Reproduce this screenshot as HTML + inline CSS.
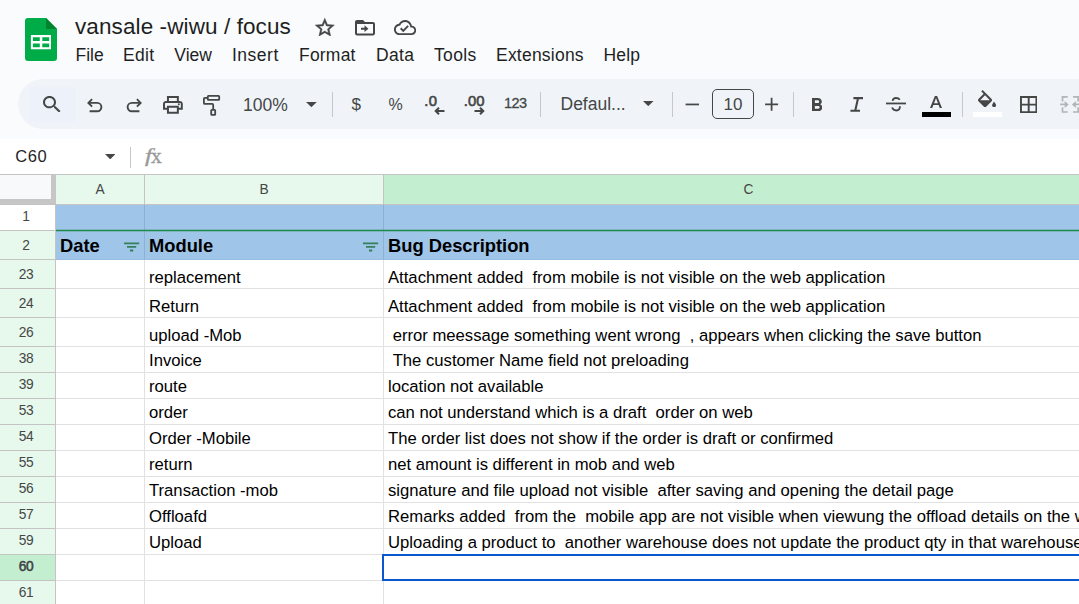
<!DOCTYPE html>
<html><head><meta charset="utf-8"><title>vansale -wiwu / focus</title>
<style>
*{box-sizing:border-box;margin:0;padding:0}
html,body{width:1079px;height:604px;overflow:hidden;background:#f9fbfd;font-family:"Liberation Sans",sans-serif;color:#1f1f1f}
.abs{position:absolute}
div{position:absolute;white-space:pre}
#title{left:75px;top:12px;font-size:22.5px;line-height:30px;color:#1f1f1f;letter-spacing:0.1px}
.menu{top:43px;font-size:17.5px;line-height:24px;color:#1f1f1f}
#tb{left:18px;top:79px;width:1100px;height:50px;border-radius:25px;background:#f0f4f9}
#tbs{left:29px;top:87px;width:47px;height:35px;background:#edf2fa}
.tbt{font-size:17.5px;color:#444746;line-height:24px}
.sep{top:92px;width:1px;height:25px;background:#c7c7c7}
#fbar{left:0;top:139px;width:1079px;height:35px;background:#fff}
#grid{left:0;top:174px;width:1079px;height:430px;background:#fff}
.hl{height:1px;background:#e1e1e1}
.vl{width:1px;background:#e1e1e1}
.rh{left:0;width:52px;text-align:center;font-size:13.75px;color:#444746;letter-spacing:-0.35px}
.ch{top:175px;height:29px;line-height:29px;text-align:center;font-size:13.75px;color:#444746;background:#e7f8ed}
.c{font-size:16.67px;line-height:20px;color:#000;height:20px}
.hb{font-size:18.33px;font-weight:700;line-height:22px;color:#000}
</style></head><body>
<svg class="abs" style="left:25px;top:17.7px" width="32" height="43" viewBox="0 0 32 43" ><path d="M3 0H21L32 10.900V40a3 3 0 0 1-3 3H3a3 3 0 0 1-3-3V3a3 3 0 0 1 3-3z" fill="#00ac47"/><path d="M21 0L32 10.900H21z" fill="#00832d"/><path d="M5.900 16.900H26V31.200H5.900zM7.900 19.300V22.900H14.800V19.300zM17.300 19.300V22.900H24.200V19.300zM7.900 25.600V29.200H14.800V25.600zM17.300 25.600V29.200H24.200V25.600z" fill="#fff" fill-rule="evenodd"/></svg>
<div id="title">vansale -wiwu / focus</div>
<svg class="abs" style="left:315.1px;top:18px" width="19.6" height="18.4" viewBox="1.800 1.700 20.400 19.500" preserveAspectRatio="none"><path fill="#444746" stroke="#444746" stroke-width="0.450" d="M22 9.240l-7.190-.620L12 2 9.190 8.630 2 9.240l5.460 4.730L5.820 21 12 17.270 18.180 21l-1.630-7.030L22 9.240zM12 15.400l-3.760 2.270 1-4.280-3.320-2.880 4.380-.380L12 6.100l1.710 4.040 4.380.380-3.320 2.880 1 4.280L12 15.400z"/></svg>
<svg class="abs" style="left:355.2px;top:20px" width="20" height="15.5" viewBox="2 4 20 16" preserveAspectRatio="none"><path fill="#444746" d="M20 6h-8l-2-2H4c-1.100 0-2 .900-2 2v12c0 1.100.900 2 2 2h16c1.100 0 2-.900 2-2V8c0-1.100-.900-2-2-2zm0 12H4V8h16v10zm-8.500-1.500l4-3.500-4-3.500v2.500H8v2h3.500v2.500z"/></svg>
<svg class="abs" style="left:394px;top:20.4px" width="22.2" height="15" viewBox="0 4 24 16" preserveAspectRatio="none"><path fill="#444746" d="M19.350 10.040C18.670 6.590 15.640 4 12 4 9.110 4 6.600 5.640 5.350 8.040 2.340 8.360 0 10.910 0 14c0 3.310 2.690 6 6 6h13c2.760 0 5-2.240 5-5 0-2.640-2.050-4.780-4.650-4.960zM19 18H6c-2.210 0-4-1.790-4-4 0-2.050 1.530-3.760 3.560-3.970l1.070-.110.500-.950C8.080 7.140 9.940 6 12 6c2.620 0 4.880 1.860 5.390 4.430l.300 1.500 1.530.110c1.560.100 2.780 1.410 2.780 2.960 0 1.650-1.350 3-3 3zm-9-3.820l-2.090-2.090L6.500 13.500 10 17l6.010-6.010-1.410-1.410z"/></svg>
<div class="menu" style="left:75.5px;letter-spacing:0px">File</div>
<div class="menu" style="left:123px;letter-spacing:0.3px">Edit</div>
<div class="menu" style="left:174.3px;letter-spacing:0px">View</div>
<div class="menu" style="left:232px;letter-spacing:0.5px">Insert</div>
<div class="menu" style="left:299px;letter-spacing:0.2px">Format</div>
<div class="menu" style="left:376px;letter-spacing:0.3px">Data</div>
<div class="menu" style="left:434px;letter-spacing:0.35px">Tools</div>
<div class="menu" style="left:496px;letter-spacing:0.22px">Extensions</div>
<div class="menu" style="left:603.5px;letter-spacing:0.2px">Help</div>
<div id="tb"></div><div id="tbs"></div>
<svg class="abs" style="left:43.4px;top:95.9px" width="17.5" height="16.5" viewBox="3 3 17.5 17.5" preserveAspectRatio="none"><path fill="#444746" d="M15.500 14h-.790l-.280-.270C15.410 12.590 16 11.110 16 9.500 16 5.910 13.090 3 9.500 3S3 5.910 3 9.500 5.910 16 9.500 16c1.610 0 3.090-.590 4.230-1.570l.270.280v.790l5 4.990L20.490 19l-4.990-5zm-6 0C7.010 14 5 11.990 5 9.500S7.010 5 9.500 5 14 7.010 14 9.500 11.990 14 9.500 14z"/></svg>
<svg class="abs" style="left:86px;top:97.4px" width="18" height="17" viewBox="0 0 18 17" ><g fill="none" stroke="#444746" stroke-width="1.9" stroke-linecap="butt" stroke-linejoin="miter"><path d="M6.100 2.200L2.400 5.900l3.700 3.700"/><path d="M2.600 5.900h8.600a4.200 4.200 0 0 1 0 8.400H3.600"/></g></svg>
<svg class="abs" style="left:124.5px;top:97.4px" width="18" height="17" viewBox="0 0 18 17" ><g fill="none" stroke="#444746" stroke-width="1.9" stroke-linecap="butt" stroke-linejoin="miter" transform="translate(18 0) scale(-1 1)"><path d="M6.100 2.200L2.400 5.900l3.700 3.700"/><path d="M2.600 5.900h8.600a4.200 4.200 0 0 1 0 8.400H3.600"/></g></svg>
<svg class="abs" style="left:163.3px;top:96.2px" width="19.8" height="17.7" viewBox="2 3 20 18" preserveAspectRatio="none"><path fill="#444746" d="M19 8h-1V3H6v5H5c-1.660 0-3 1.340-3 3v6h4v4h12v-4h4v-6c0-1.660-1.340-3-3-3zM8 5h8v3H8V5zm8 14H8v-4h8v4zm4-4h-2v-2H6v2H4v-4c0-.550.450-1 1-1h14c.550 0 1 .450 1 1v4z"/><circle cx="18" cy="11.500" r="1" fill="#444746"/></svg>
<svg class="abs" style="left:202px;top:94px" width="20" height="23" viewBox="0 0 20 23" ><g fill="none" stroke="#444746" stroke-width="1.800" stroke-linejoin="round"><rect x="5.800" y="1.800" width="11.400" height="4.100" rx="0.700"/><path d="M5.800 3.800H2.900a1 1 0 0 0-1 1V8.900a1 1 0 0 0 1 1H10.200a1 1 0 0 1 1 1V15.800"/><rect x="9.200" y="15.800" width="4" height="5.100" rx="0.700"/></g></svg>
<div class="tbt" style="left:243px;top:92.500px">100%</div>
<svg class="abs" style="left:305.8px;top:102px" width="10.8" height="5.2" viewBox="0 0 10 5" preserveAspectRatio="none"><path d="M0 0h10L5 5z" fill="#444746"/></svg>
<div class="sep" style="left:332px"></div>
<div class="tbt" style="left:351.500px;top:92.500px;font-size:17px">$</div>
<div class="tbt" style="left:388.500px;top:92.500px;font-size:16px">%</div>
<div class="tbt" style="left:424.300px;top:88.700px;font-size:14.800px;-webkit-text-stroke:0.6px #444746;letter-spacing:0.3px">.0</div>
<svg class="abs" style="left:434.3px;top:107.4px" width="11" height="8" viewBox="0 0 11 8" ><path d="M10.500 4H2M5 0.800L1.700 4l3.300 3.200" fill="none" stroke="#444746" stroke-width="2"/></svg>
<div class="tbt" style="left:463.800px;top:88.700px;font-size:14.800px;-webkit-text-stroke:0.6px #444746;letter-spacing:0px">.00</div>
<svg class="abs" style="left:474px;top:107.4px" width="11" height="8" viewBox="0 0 11 8" ><path d="M0.500 4H9M6 0.800L9.300 4l-3.300 3.200" fill="none" stroke="#444746" stroke-width="2"/></svg>
<div class="tbt" style="left:504px;top:91.100px;font-size:14.500px;letter-spacing:-0.6px;-webkit-text-stroke:0.3px #444746">123</div>
<div class="sep" style="left:540px"></div>
<div class="tbt" style="left:560.500px;top:92px">Defaul...</div>
<svg class="abs" style="left:643.3px;top:101.3px" width="10.5" height="5.2" viewBox="0 0 10 5" preserveAspectRatio="none"><path d="M0 0h10L5 5z" fill="#444746"/></svg>
<div class="sep" style="left:672px"></div>
<svg class="abs" style="left:684px;top:96px" width="16" height="16" viewBox="0 0 16 16" ><path d="M1.600 8.450H15" stroke="#444746" stroke-width="1.750" fill="none"/></svg>
<div style="left:712px;top:89px;width:42px;height:30px;border:1px solid #444746;border-radius:5px"></div>
<div class="tbt" style="left:712px;top:92.500px;width:42px;text-align:center;font-size:17px">10</div>
<svg class="abs" style="left:764px;top:96px" width="16" height="16" viewBox="0 0 16 16" ><path d="M1.100 8.300H14.100M7.600 1.800V14.800" stroke="#444746" stroke-width="1.750" fill="none"/></svg>
<div class="sep" style="left:793px"></div>
<svg class="abs" style="left:812px;top:98px" width="10.3" height="13" viewBox="7 4 10.75 14" preserveAspectRatio="none"><path fill="#444746" d="M15.600 10.790c.970-.670 1.650-1.770 1.650-2.790 0-2.260-1.750-4-4-4H7v14h7.040c2.090 0 3.710-1.700 3.710-3.790 0-1.520-.860-2.820-2.150-3.420zM10 6.500h3c.830 0 1.500.670 1.500 1.500s-.670 1.500-1.500 1.500h-3v-3zm3.500 9H10v-3h3.500c.830 0 1.500.670 1.500 1.500s-.670 1.500-1.500 1.500z"/></svg>
<svg class="abs" style="left:849px;top:96px" width="16" height="17" viewBox="0 0 16 17" ><g fill="none" stroke="#444746" stroke-width="2.050"><path d="M4.400 2.100H14M1.400 14.800H11M9.100 2.100L6.200 14.800"/></g></svg>
<svg class="abs" style="left:885px;top:96px" width="22" height="17" viewBox="0 0 22 17" ><g fill="none" stroke="#444746" stroke-width="1.900"><path d="M1 7.450H21" stroke-width="1.800"/><path d="M7.800 4.900C7.600 3 9.200 1.950 11 1.950C12.700 1.950 13.900 2.500 14.800 3.700"/><path d="M7.100 11.500C7.900 13.500 9.400 14.450 11.300 14.450C13.700 14.450 15.100 12.900 14.900 10.200"/></g></svg>
<svg class="abs" style="left:930.3px;top:95.6px" width="12" height="12" viewBox="5.490 3 13.020 14" preserveAspectRatio="none"><path fill="#444746" d="M5.490 17h2.420l1.270-3.580h5.650L16.090 17h2.420L13.250 3h-2.500L5.490 17zm4.420-5.610l2.030-5.790h.120l2.030 5.790H9.910z"/></svg>
<div style="left:922px;top:112px;width:29px;height:5px;background:#000"></div>
<div class="sep" style="left:962px"></div>
<svg class="abs" style="left:977.9px;top:90.2px" width="18.1" height="17.3" viewBox="3 0 18 17" preserveAspectRatio="none"><path fill="#444746" d="M16.560 8.940L7.620 0 6.210 1.410l2.380 2.380-5.150 5.150c-.590.590-.590 1.540 0 2.120l5.500 5.500c.290.290.680.440 1.060.440s.770-.150 1.060-.440l5.500-5.500c.590-.580.590-1.530 0-2.120zM5.210 10L10 5.210 14.790 10H5.210zM19 11.500s-2 2.170-2 3.500c0 1.100.900 2 2 2s2-.900 2-2c0-1.330-2-3.500-2-3.500z"/></svg>
<div style="left:973px;top:112px;width:29px;height:5px;background:#fff"></div>
<svg class="abs" style="left:1020px;top:95.7px" width="17.4" height="17.2" viewBox="3 3 18 18" preserveAspectRatio="none"><path fill="#444746" d="M3 3v18h18V3H3zm8 16H5v-6h6v6zm0-8H5V5h6v6zm8 8h-6v-6h6v6zm0-8h-6V5h6v6z"/></svg>
<svg class="abs" style="left:1060px;top:95px" width="22" height="19" viewBox="0 0 22 19" ><g fill="none" stroke="#b2b5b8" stroke-width="1.700"><path d="M7.700 1.800H2.500V6.500M2.500 12.300V17H7.700M13 1.800H18.100V6.500M18.100 12.300V17H13M0.100 9.400H6M14.500 9.400H22"/></g><path d="M4.700 6L8.700 9.400 4.700 12.900zM15.900 6L11.900 9.400 15.900 12.900z" fill="#b2b5b8"/></svg>
<div id="fbar"></div>
<div style="left:15.300px;top:146.400px;font-size:16.500px;line-height:20px;color:#1f1f1f;letter-spacing:0.55px">C60</div>
<svg class="abs" style="left:105px;top:154px" width="10.4" height="5.3" viewBox="0 0 10 5" preserveAspectRatio="none"><path d="M0 0h10L5 5z" fill="#444746"/></svg>
<div style="left:130px;top:147px;width:1px;height:21px;background:#c7c7c7"></div>
<div style="left:0;top:0;font-family:'Liberation Serif',serif;color:#9a9a9a;-webkit-text-stroke:0.35px #9a9a9a;line-height:24px"><span style="position:absolute;left:144.800px;top:144.300px;font-style:italic;font-size:19.500px;transform:scaleX(1.3);transform-origin:0 0">f</span><span style="position:absolute;left:151px;top:143.850px;font-size:21.500px">x</span></div>
<div id="grid"></div>
<div style="left:0;top:174px;width:1079px;height:1px;background:#c4c4c4"></div>
<div style="left:0;top:175px;width:56px;height:29px;background:#c6c6c6"></div><div style="left:0;top:175px;width:51px;height:24px;background:#f8f9fa"></div>
<div class="ch" style="left:56px;width:88px">A</div>
<div class="ch" style="left:145px;width:238px">B</div>
<div class="ch" style="left:384px;width:695px;background:#c4eed0;text-align:left;padding-left:359.500px">C</div>
<div style="left:144px;top:175px;width:1px;height:29px;background:#c4c4c4"></div><div style="left:383px;top:175px;width:1px;height:29px;background:#c4c4c4"></div>
<div style="left:0;top:204px;width:1079px;height:1px;background:#c4c4c4"></div>
<div style="left:0;top:205px;width:55px;height:25px;background:#fff"></div><div class="rh" style="top:207.1px;height:20px;line-height:20px">1</div>
<div style="left:0;top:230px;width:55px;height:1px;background:#c4c4c4"></div>
<div style="left:56px;top:205px;width:1023px;height:26px;background:#9fc5e8"></div>
<div style="left:0;top:231px;width:55px;height:28px;background:#e7f8ed"></div><div class="rh" style="top:236.2px;height:20px;line-height:20px">2</div>
<div style="left:0;top:259px;width:55px;height:1px;background:#c4c4c4"></div>
<div style="left:56px;top:231px;width:1023px;height:29px;background:#9fc5e8"></div>
<div style="left:0;top:260px;width:55px;height:28px;background:#e7f8ed"></div><div class="rh" style="top:265.0px;height:20px;line-height:20px">23</div>
<div style="left:0;top:288px;width:55px;height:1px;background:#c4c4c4"></div>
<div class="hl" style="left:56px;top:288px;width:1023px"></div>
<div class="c" style="left:149px;top:268px">replacement</div><div class="c" style="left:388px;top:268px;width:691px;overflow:hidden">Attachment added  from mobile is not visible on the web application</div>
<div style="left:0;top:289px;width:55px;height:28px;background:#e7f8ed"></div><div class="rh" style="top:294.2px;height:20px;line-height:20px">24</div>
<div style="left:0;top:317px;width:55px;height:1px;background:#c4c4c4"></div>
<div class="hl" style="left:56px;top:317px;width:1023px"></div>
<div class="c" style="left:149px;top:297px">Return</div><div class="c" style="left:388px;top:297px;width:691px;overflow:hidden">Attachment added  from mobile is not visible on the web application</div>
<div style="left:0;top:318px;width:55px;height:28px;background:#e7f8ed"></div><div class="rh" style="top:323.2px;height:20px;line-height:20px">26</div>
<div style="left:0;top:346px;width:55px;height:1px;background:#c4c4c4"></div>
<div class="hl" style="left:56px;top:346px;width:1023px"></div>
<div class="c" style="left:149px;top:326px">upload -Mob</div><div class="c" style="left:388px;top:326px;width:691px;overflow:hidden"> error meessage something went wrong  , appears when clicking the save button</div>
<div style="left:0;top:347px;width:55px;height:25px;background:#e7f8ed"></div><div class="rh" style="top:349.1px;height:20px;line-height:20px">38</div>
<div style="left:0;top:372px;width:55px;height:1px;background:#c4c4c4"></div>
<div class="hl" style="left:56px;top:372px;width:1023px"></div>
<div class="c" style="left:149px;top:351px">Invoice</div><div class="c" style="left:388px;top:351px;width:691px;overflow:hidden"> The customer Name field not preloading</div>
<div style="left:0;top:373px;width:55px;height:25px;background:#e7f8ed"></div><div class="rh" style="top:375.1px;height:20px;line-height:20px">39</div>
<div style="left:0;top:398px;width:55px;height:1px;background:#c4c4c4"></div>
<div class="hl" style="left:56px;top:398px;width:1023px"></div>
<div class="c" style="left:149px;top:377px">route</div><div class="c" style="left:388px;top:377px;width:691px;overflow:hidden">location not available</div>
<div style="left:0;top:399px;width:55px;height:25px;background:#e7f8ed"></div><div class="rh" style="top:401.1px;height:20px;line-height:20px">53</div>
<div style="left:0;top:424px;width:55px;height:1px;background:#c4c4c4"></div>
<div class="hl" style="left:56px;top:424px;width:1023px"></div>
<div class="c" style="left:149px;top:403px">order</div><div class="c" style="left:388px;top:403px;width:691px;overflow:hidden">can not understand which is a draft  order on web</div>
<div style="left:0;top:425px;width:55px;height:25px;background:#e7f8ed"></div><div class="rh" style="top:427.1px;height:20px;line-height:20px">54</div>
<div style="left:0;top:450px;width:55px;height:1px;background:#c4c4c4"></div>
<div class="hl" style="left:56px;top:450px;width:1023px"></div>
<div class="c" style="left:149px;top:429px">Order -Mobile</div><div class="c" style="left:388px;top:429px;width:691px;overflow:hidden">The order list does not show if the order is draft or confirmed</div>
<div style="left:0;top:451px;width:55px;height:25px;background:#e7f8ed"></div><div class="rh" style="top:453.1px;height:20px;line-height:20px">55</div>
<div style="left:0;top:476px;width:55px;height:1px;background:#c4c4c4"></div>
<div class="hl" style="left:56px;top:476px;width:1023px"></div>
<div class="c" style="left:149px;top:455px">return</div><div class="c" style="left:388px;top:455px;width:691px;overflow:hidden">net amount is different in mob and web</div>
<div style="left:0;top:477px;width:55px;height:25px;background:#e7f8ed"></div><div class="rh" style="top:479.1px;height:20px;line-height:20px">56</div>
<div style="left:0;top:502px;width:55px;height:1px;background:#c4c4c4"></div>
<div class="hl" style="left:56px;top:502px;width:1023px"></div>
<div class="c" style="left:149px;top:481px">Transaction -mob</div><div class="c" style="left:388px;top:481px;width:691px;overflow:hidden">signature and file upload not visible  after saving and opening the detail page</div>
<div style="left:0;top:503px;width:55px;height:25px;background:#e7f8ed"></div><div class="rh" style="top:505.1px;height:20px;line-height:20px">57</div>
<div style="left:0;top:528px;width:55px;height:1px;background:#c4c4c4"></div>
<div class="hl" style="left:56px;top:528px;width:1023px"></div>
<div class="c" style="left:149px;top:507px">Offloafd</div><div class="c" style="left:388px;top:507px;width:691px;overflow:hidden">Remarks added  from the  mobile app are not visible when viewung the offload details on the web</div>
<div style="left:0;top:529px;width:55px;height:25px;background:#e7f8ed"></div><div class="rh" style="top:531.1px;height:20px;line-height:20px">59</div>
<div style="left:0;top:554px;width:55px;height:1px;background:#c4c4c4"></div>
<div class="hl" style="left:56px;top:554px;width:1023px"></div>
<div class="c" style="left:149px;top:533px">Upload</div><div class="c" style="left:388px;top:533px;width:691px;overflow:hidden">Uploading a product to  another warehouse does not update the product qty in that warehouse</div>
<div style="left:0;top:555px;width:55px;height:25px;background:#c4eed0"></div><div class="rh" style="top:557.1px;height:20px;line-height:20px;color:#3c4043;-webkit-text-stroke:0.5px #3c4043">60</div>
<div style="left:0;top:580px;width:55px;height:1px;background:#c4c4c4"></div>
<div class="hl" style="left:56px;top:580px;width:1023px"></div>
<div style="left:0;top:581px;width:55px;height:25px;background:#e7f8ed"></div><div class="rh" style="top:583.1px;height:20px;line-height:20px">61</div>
<div style="left:0;top:606px;width:55px;height:1px;background:#c4c4c4"></div>
<div class="hl" style="left:56px;top:606px;width:1023px"></div>
<div style="left:55px;top:204px;width:1px;height:400px;background:#c4c4c4"></div>
<div class="vl" style="left:144px;top:260px;height:344px"></div><div class="vl" style="left:383px;top:260px;height:344px"></div>
<div style="left:144px;top:205px;width:1px;height:55px;background:#8fb1d1"></div><div style="left:383px;top:205px;width:1px;height:55px;background:#8fb1d1"></div>
<div style="left:56px;top:259px;width:1023px;height:1px;background:#98bcdf"></div>
<svg class="abs" style="left:56px;top:228px" width="1023" height="5" viewBox="0 0 1023 5" ><path d="M0 2.450H1023" stroke="#1e8a48" stroke-width="1.450" fill="none"/></svg>
<div class="hb" style="left:60px;top:235px">Date</div><div class="hb" style="left:149px;top:235px">Module</div><div class="hb" style="left:388px;top:235px">Bug Description</div>
<svg class="abs" style="left:123.7px;top:242px" width="16" height="11" viewBox="0 0 16 11" ><path d="M0 1.300h15.200M3 4.900h9.200M6 8.500h3.200" stroke="#35805a" stroke-width="1.800" fill="none"/></svg>
<svg class="abs" style="left:362.7px;top:242px" width="16" height="11" viewBox="0 0 16 11" ><path d="M0 1.300h15.200M3 4.900h9.200M6 8.500h3.200" stroke="#35805a" stroke-width="1.800" fill="none"/></svg>
<div style="left:382px;top:554px;width:720px;height:27px;border:2px solid #0b57d0"></div>
</body></html>
